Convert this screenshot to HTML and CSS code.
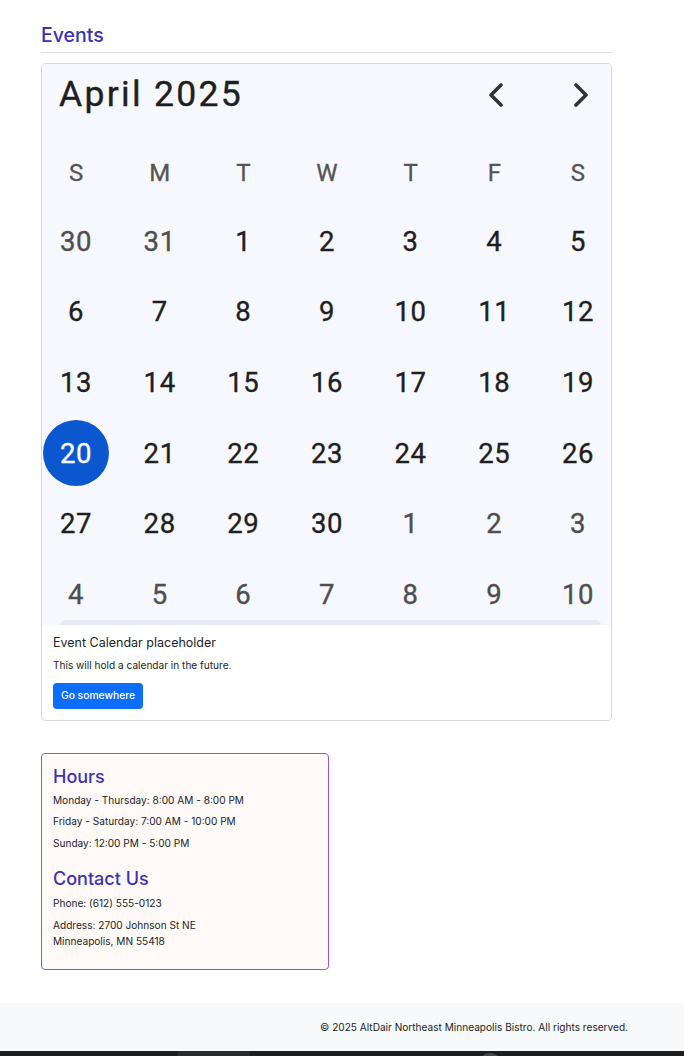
FILE: index.html
```html
<!DOCTYPE html>
<html lang="en">
<head>
<meta charset="utf-8">
<title>Events</title>
<link rel="stylesheet" href="styles.css">
</head>
<body>
<main class="page">
  <section class="events">
    <h2 class="section-title">Events</h2>
    <div class="card">
      <div class="calendar">
        <div class="cal-head">
          <span class="cal-month">April 2025</span>
          <div class="cal-nav">
            <span class="nav-btn"><svg width="24" height="24" viewBox="0 0 24 24"><path d="M16 2 L6 12 L16 22" fill="none" stroke="#333" stroke-width="3.6" stroke-linecap="round" stroke-linejoin="round"/></svg></span>
            <span class="nav-btn"><svg width="24" height="24" viewBox="0 0 24 24"><path d="M8 2 L18 12 L8 22" fill="none" stroke="#333" stroke-width="3.6" stroke-linecap="round" stroke-linejoin="round"/></svg></span>
          </div>
        </div>
        <div class="cal-grid weekdays">
          <span>S</span><span>M</span><span>T</span><span>W</span><span>T</span><span>F</span><span>S</span>
        </div>
        <div class="cal-grid dates">
          <span class="out">30</span><span class="out">31</span><span>1</span><span>2</span><span>3</span><span>4</span><span>5</span>
          <span>6</span><span>7</span><span>8</span><span>9</span><span>10</span><span>11</span><span>12</span>
          <span>13</span><span>14</span><span>15</span><span>16</span><span>17</span><span>18</span><span>19</span>
          <span class="today">20</span><span>21</span><span>22</span><span>23</span><span>24</span><span>25</span><span>26</span>
          <span>27</span><span>28</span><span>29</span><span>30</span><span class="out">1</span><span class="out">2</span><span class="out">3</span>
          <span class="out">4</span><span class="out">5</span><span class="out">6</span><span class="out">7</span><span class="out">8</span><span class="out">9</span><span class="out">10</span>
        </div>
        <div class="cal-scroll"></div>
      </div>
      <div class="card-body">
        <h5 class="card-title">Event Calendar placeholder</h5>
        <p class="card-text">This will hold a calendar in the future.</p>
        <a class="btn" href="#">Go somewhere</a>
      </div>
    </div>
  </section>

  <aside class="info">
    <h3 class="info-title">Hours</h3>
    <p>Monday - Thursday: 8:00 AM - 8:00 PM</p>
    <p>Friday - Saturday: 7:00 AM - 10:00 PM</p>
    <p>Sunday: 12:00 PM - 5:00 PM</p>
    <h3 class="info-title contact">Contact Us</h3>
    <p>Phone: (612) 555-0123</p>
    <p>Address: 2700 Johnson St NE<br>Minneapolis, MN 55418</p>
  </aside>
</main>
<footer class="footer">
  <p>© 2025 AltDair Northeast Minneapolis Bistro. All rights reserved.</p>
</footer>
<div class="os-bar"><span class="seg"></span><span class="knob"></span></div>
</body>
</html>
```

FILE: styles.css
```css
* { box-sizing: border-box; }

html, body {
  margin: 0;
  padding: 0;
  background: #ffffff;
}

body {
  font-family: Inter, "Liberation Sans", Arial, sans-serif;
  color: #212529;
  width: 684px;
  height: 1056px;
  overflow: hidden;
}

.page {
  padding: 0 0 0 41px;
  width: 612px;
}

.section-title {
  margin: 23px 0 0;
  padding-bottom: 5px;
  border-bottom: 1px solid #dedede;
  font-size: 19.5px;
  line-height: 24px;
  font-weight: 500;
  color: #3a33b4;
}

.card {
  margin-top: 10px;
  border: 1px solid #d8d8d8;
  border-radius: 4px;
  width: 571px;
  overflow: hidden;
}

.calendar {
  position: relative;
  height: 561px;
  overflow: hidden;
  background: #f7f8fd;
  font-family: Roboto, "Open Sans", sans-serif;
}

.cal-head {
  display: flex;
  align-items: center;
  justify-content: space-between;
  padding: 10px 11px 26px 17px;
  height: 76px;
}

.cal-month {
  font-size: 35.5px;
  line-height: 40px;
  letter-spacing: 2.3px;
  color: #1f1f1f;
  font-weight: 400;
  -webkit-text-stroke: 0.4px #1f1f1f;
}

.cal-nav {
  display: flex;
  gap: 43px;
  align-items: center;
  margin-top: 1px;
}

.nav-btn {
  width: 40px;
  height: 40px;
  display: flex;
  align-items: center;
  justify-content: center;
}

.cal-grid {
  display: grid;
  grid-template-columns: repeat(7, 66px);
  column-gap: 17.67px;
  padding-left: 1px;
}

.cal-grid span {
  display: flex;
  align-items: center;
  justify-content: center;
}

.weekdays span {
  height: 66px;
  font-size: 24px;
  font-weight: 400;
  color: #555555;
  -webkit-text-stroke: 0.3px #555555;
}

.dates span {
  height: 70.6px;
  font-size: 27.5px;
  font-weight: 400;
  color: #1f1f1f;
  letter-spacing: 0.6px;
  -webkit-text-stroke: 0.35px #1f1f1f;
}

.dates span.out {
  color: #4f4f4f;
  -webkit-text-stroke: 0.35px #4f4f4f;
}

.dates span.today {
  background: #0b57d0;
  color: #ffffff;
  -webkit-text-stroke: 0.35px #ffffff;
  border-radius: 50%;
  width: 66px;
  height: 66px;
  margin: 2.3px 0;
}

.cal-scroll {
  position: absolute;
  left: 18px;
  right: 10px;
  bottom: 0;
  height: 5px;
  background: #e6e9f1;
  border-radius: 6px 6px 0 0;
}

.card-body {
  padding: 10px 11px 11px 11px;
  background: #ffffff;
}

.card-title {
  margin: 0;
  font-size: 12.5px;
  line-height: 16px;
  font-weight: 400;
  color: #212529;
}

.card-text {
  margin: 7px 0 11px;
  font-size: 10.1px;
  line-height: 14px;
  color: #212529;
}

.btn {
  display: inline-block;
  background: #0d6efd;
  color: #ffffff;
  text-decoration: none;
  font-size: 10.3px;
  font-weight: 500;
  line-height: 25.5px;
  height: 25.5px;
  width: 90px;
  text-align: center;
  border-radius: 4px;
}

.info {
  margin-top: 32px;
  width: 288px;
  padding: 12px 11px 15px;
  border: 1px solid #9d52c9;
  border-radius: 4px;
  background: #fff9f7;
}

.info-title {
  margin: 0 0 4px;
  font-size: 18px;
  line-height: 22px;
  font-weight: 500;
  color: #3a33b4;
}

.info-title.contact {
  margin-top: 17px;
  margin-bottom: 5.5px;
}

.info p {
  margin: 0 0 5.5px;
  font-size: 10.1px;
  line-height: 16px;
  color: #212529;
}

.footer {
  margin-top: 33px;
  height: 48px;
  background: #f8f9fa;
  display: flex;
  align-items: center;
  justify-content: flex-end;
  padding-right: 56px;
}

.footer p {
  margin: 0;
  font-size: 10.1px;
  line-height: 14px;
  color: #212529;
}

.os-bar {
  position: relative;
  height: 6px;
  background: #1e1e1e;
  overflow: hidden;
}

.os-bar .seg {
  position: absolute;
  left: 178px;
  width: 72px;
  top: 0;
  bottom: 0;
  background: #2b2b2b;
}

.os-bar .knob {
  position: absolute;
  left: 479px;
  top: 2px;
  width: 22px;
  height: 22px;
  border-radius: 50%;
  background: #4a4a4a;
}
```
